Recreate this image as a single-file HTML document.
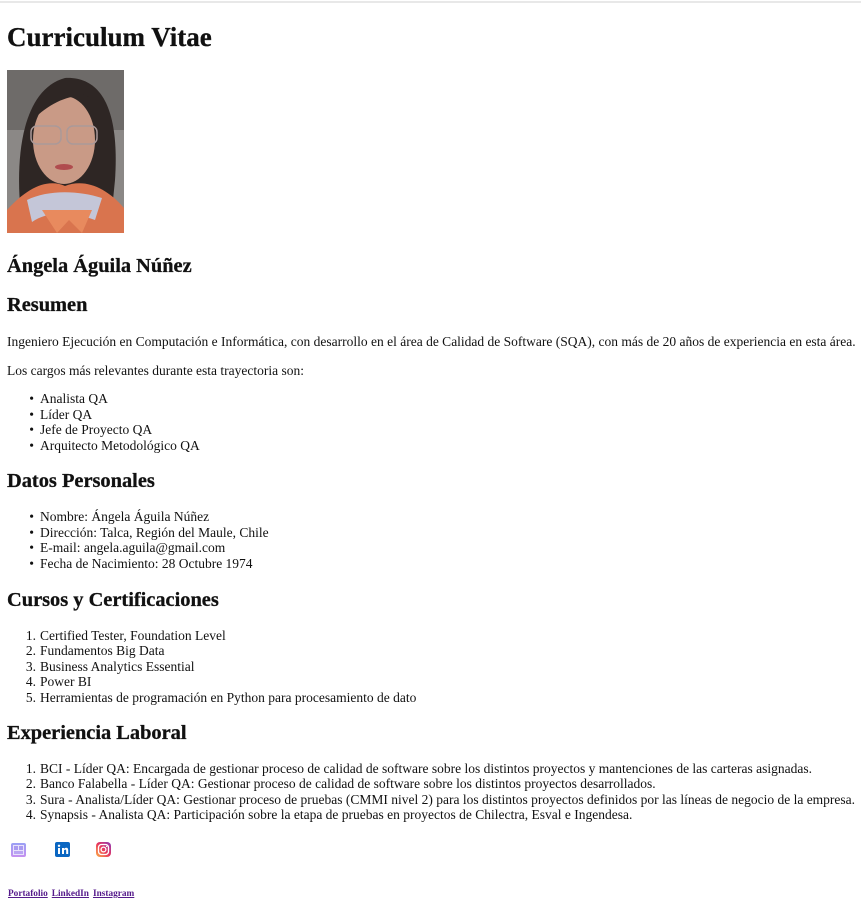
<!DOCTYPE html>
<html><head><meta charset="utf-8"><style>
*{margin:0;padding:0}
body{width:861px;height:897px;background:#fff;position:relative;overflow:hidden;font-family:"Liberation Serif",serif;color:#111}
.a{position:absolute;white-space:nowrap;font-size:13.5px;line-height:15.4px}
.h{position:absolute;white-space:nowrap;font-weight:700;font-size:20.4px;line-height:24px;-webkit-text-stroke:0.3px #111}
.b{position:absolute;left:7px;width:8px;text-align:right;font-size:13.5px;line-height:15.4px}
.l{left:40px}
.n{position:absolute;left:20px;width:16px;text-align:right;font-size:13.5px;line-height:15.4px}
a{color:#551a8b;font-weight:700;font-size:9.3px;text-decoration:underline}
</style></head><body>
<div style="position:absolute;left:0;top:1px;width:861px;height:2px;background:#e8e8e8"></div>
<div class="h" style="left:7px;top:21px;font-size:27px;line-height:32px">Curriculum Vitae</div>
<svg style="position:absolute;left:7px;top:70px" width="117" height="163" viewBox="0 0 117 163">
<rect width="117" height="163" fill="#6e6b69"/>
<rect x="0" y="60" width="117" height="103" fill="#8b8886"/>
<path d="M14 145 C8 90 14 20 58 8 C100 6 112 50 108 110 L104 150 Z" fill="#2e2624"/>
<ellipse cx="57" cy="70" rx="31" ry="44" fill="#c99a86"/>
<path d="M26 50 C30 22 60 14 84 28 C70 22 45 30 26 50Z" fill="#2e2624"/>
<rect x="24" y="56" width="30" height="18" rx="6" fill="none" stroke="#a99" stroke-width="1.5"/>
<rect x="60" y="56" width="30" height="18" rx="6" fill="none" stroke="#a99" stroke-width="1.5"/>
<ellipse cx="57" cy="97" rx="9" ry="3" fill="#b04c4e"/>
<path d="M0 140 C20 118 40 108 58 116 C78 108 100 118 117 138 L117 163 L0 163Z" fill="#d9744e"/>
<path d="M20 130 C40 120 70 120 95 128 L88 150 C60 140 40 142 25 152Z" fill="#c4c6d8"/>
<path d="M35 140 L50 163 L62 150 L75 163 L85 140Z" fill="#e88a5e"/>
</svg>
<div class="h" style="left:7px;top:254px">Ángela Águila Núñez</div>
<div class="h" style="left:7px;top:293px">Resumen</div>
<div class="a" style="left:7px;top:334px">Ingeniero Ejecución en Computación e Informática, con desarrollo en el área de Calidad de Software (SQA), con más de 20 años de experiencia en esta área.</div>
<div class="a" style="left:7px;top:363px">Los cargos más relevantes durante esta trayectoria son:</div>
<div class="b" style="left:26px;top:391px">•</div><div class="a l" style="top:391px">Analista QA</div>
<div class="b" style="left:26px;top:407px">•</div><div class="a l" style="top:407px">Líder QA</div>
<div class="b" style="left:26px;top:422px">•</div><div class="a l" style="top:422px">Jefe de Proyecto QA</div>
<div class="b" style="left:26px;top:438px">•</div><div class="a l" style="top:438px">Arquitecto Metodológico QA</div>
<div class="h" style="left:7px;top:469px">Datos Personales</div>
<div class="b" style="left:26px;top:509px">•</div><div class="a l" style="top:509px">Nombre: Ángela Águila Núñez</div>
<div class="b" style="left:26px;top:525px">•</div><div class="a l" style="top:525px">Dirección: Talca, Región del Maule, Chile</div>
<div class="b" style="left:26px;top:540px">•</div><div class="a l" style="top:540px">E-mail: angela.aguila@gmail.com</div>
<div class="b" style="left:26px;top:556px">•</div><div class="a l" style="top:556px">Fecha de Nacimiento: 28 Octubre 1974</div>
<div class="h" style="left:7px;top:588px">Cursos y Certificaciones</div>
<div class="n" style="top:628px">1.</div><div class="a l" style="top:628px">Certified Tester, Foundation Level</div>
<div class="n" style="top:643px">2.</div><div class="a l" style="top:643px">Fundamentos Big Data</div>
<div class="n" style="top:659px">3.</div><div class="a l" style="top:659px">Business Analytics Essential</div>
<div class="n" style="top:674px">4.</div><div class="a l" style="top:674px">Power BI</div>
<div class="n" style="top:690px">5.</div><div class="a l" style="top:690px">Herramientas de programación en Python para procesamiento de dato</div>
<div class="h" style="left:7px;top:721px">Experiencia Laboral</div>
<div class="n" style="top:761px">1.</div><div class="a l" style="top:761px">BCI - Líder QA: Encargada de gestionar proceso de calidad de software sobre los distintos proyectos y mantenciones de las carteras asignadas.</div>
<div class="n" style="top:776px">2.</div><div class="a l" style="top:776px">Banco Falabella - Líder QA: Gestionar proceso de calidad de software sobre los distintos proyectos desarrollados.</div>
<div class="n" style="top:792px">3.</div><div class="a l" style="top:792px">Sura - Analista/Líder QA: Gestionar proceso de pruebas (CMMI nivel 2) para los distintos proyectos definidos por las líneas de negocio de la empresa.</div>
<div class="n" style="top:807px">4.</div><div class="a l" style="top:807px">Synapsis - Analista QA: Participación sobre la etapa de pruebas en proyectos de Chilectra, Esval e Ingendesa.</div>
<svg style="position:absolute;left:10px;top:841px" width="17" height="17" viewBox="0 0 17 17"><defs><linearGradient id="p" x1="0" y1="0" x2="0" y2="1"><stop offset="0" stop-color="#9aa0f5"/><stop offset="1" stop-color="#c690f0"/></linearGradient></defs><rect x="1" y="2" width="15" height="14" rx="2" fill="url(#p)"/><rect x="3" y="4" width="11" height="10" fill="#e8e2fb"/><rect x="4" y="5" width="4" height="4" fill="#a99af0"/><rect x="9" y="5" width="4" height="4" fill="#a99af0"/><rect x="4" y="10" width="9" height="3" fill="#b9a5f2"/></svg>
<svg style="position:absolute;left:54px;top:841px" width="17" height="17" viewBox="0 0 17 17"><rect x="1" y="1" width="15" height="15" rx="2" fill="#0a66c2"/><rect x="4" y="7" width="2" height="6" fill="#fff"/><circle cx="5" cy="4.8" r="1.2" fill="#fff"/><path d="M8 7h2v1c.5-.8 1.3-1.2 2.2-1.2 1.5 0 2 1 2 2.5V13h-2V9.7c0-.7-.3-1.1-.9-1.1S10 9 10 9.8V13H8Z" fill="#fff"/></svg>
<svg style="position:absolute;left:95px;top:841px" width="17" height="17" viewBox="0 0 17 17"><defs><linearGradient id="g" x1="0" y1="1" x2="1" y2="0"><stop offset="0" stop-color="#fdb044"/><stop offset=".5" stop-color="#e8365d"/><stop offset="1" stop-color="#8a3ab9"/></linearGradient></defs><rect x="1" y="1" width="15" height="15" rx="4" fill="url(#g)"/><rect x="3.5" y="3.5" width="10" height="10" rx="3" fill="none" stroke="#fff" stroke-width="1.3"/><circle cx="8.5" cy="8.5" r="2.4" fill="none" stroke="#fff" stroke-width="1.3"/><circle cx="11.6" cy="5.4" r=".7" fill="#fff"/></svg>
<div style="position:absolute;left:8px;top:886px;line-height:11px;white-space:nowrap"><a>Portafolio</a> <a>LinkedIn</a> <a>Instagram</a></div>
</body></html>
